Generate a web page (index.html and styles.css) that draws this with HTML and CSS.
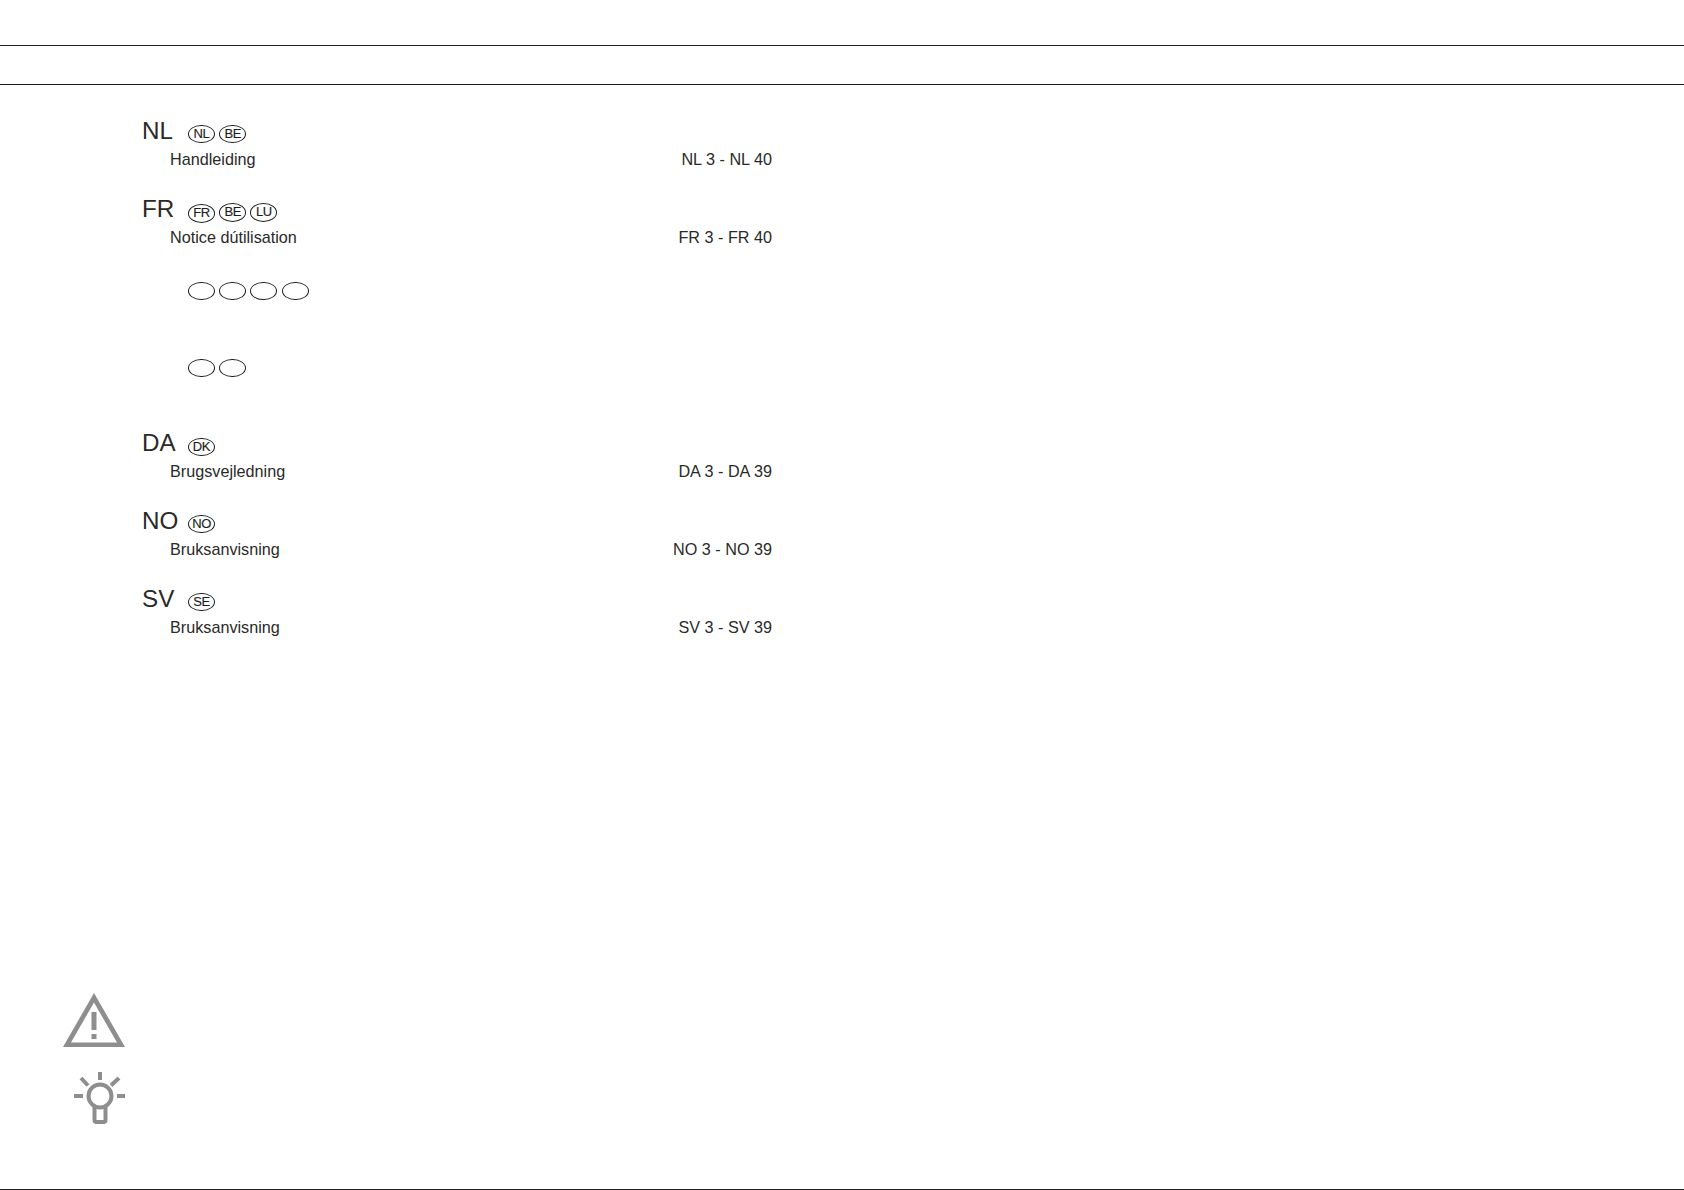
FILE: index.html
```html
<!DOCTYPE html>
<html lang="nl">
<head>
<meta charset="utf-8">
<title>Inhoud</title>
<link rel="stylesheet" href="styles.css">
</head>
<body>
<div class="page">
  <div class="band"></div>
  <main class="toc">
    <section class="entry">
      <div class="head"><span class="code">NL</span><span class="marks"><span class="mark">NL</span><span class="mark">BE</span></span></div>
      <div class="line"><span>Handleiding</span><span>NL 3 - NL 40</span></div>
    </section>
    <section class="entry">
      <div class="head"><span class="code">FR</span><span class="marks down"><span class="mark low">FR</span><span class="mark">BE</span><span class="mark">LU</span></span></div>
      <div class="line"><span>Notice dútilisation</span><span>FR 3 - FR 40</span></div>
    </section>
    <section class="entry">
      <div class="head"><span class="code">&nbsp;</span><span class="marks down"><span class="mark"></span><span class="mark"></span><span class="mark"></span><span class="mark"></span></span></div>
      <div class="line"><span>&nbsp;</span></div>
    </section>
    <section class="entry">
      <div class="head"><span class="code">&nbsp;</span><span class="marks"><span class="mark"></span><span class="mark"></span></span></div>
      <div class="line"><span>&nbsp;</span></div>
    </section>
    <section class="entry">
      <div class="head"><span class="code">DA</span><span class="marks down"><span class="mark">DK</span></span></div>
      <div class="line"><span>Brugsvejledning</span><span>DA 3 - DA 39</span></div>
    </section>
    <section class="entry">
      <div class="head"><span class="code">NO</span><span class="marks"><span class="mark">NO</span></span></div>
      <div class="line"><span>Bruksanvisning</span><span>NO 3 - NO 39</span></div>
    </section>
    <section class="entry">
      <div class="head"><span class="code">SV</span><span class="marks"><span class="mark">SE</span></span></div>
      <div class="line"><span>Bruksanvisning</span><span>SV 3 - SV 39</span></div>
    </section>
  </main>
  <div class="legend">
    <svg class="warn" width="62" height="54" viewBox="0 0 62 54" aria-hidden="true">
      <path fill-rule="evenodd" d="M31 0 L62 54 H0 Z M31 9.5 L8 49.5 H54 Z" fill="#8e8e8e"/>
      <rect x="28.5" y="19" width="5" height="18" fill="#8e8e8e"/>
      <rect x="28.5" y="41" width="5" height="5" fill="#8e8e8e"/>
    </svg>
    <svg class="bulb" width="52" height="52" viewBox="0 0 52 52" aria-hidden="true">
      <g fill="none" stroke="#8e8e8e" stroke-width="4">
        <path d="M26 0 V8"/>
        <path d="M7 6 L14 13.5"/>
        <path d="M45 6 L37 13.5"/>
        <path d="M0 24 H9"/>
        <path d="M43 24 H51"/>
        <circle cx="26" cy="24" r="11.5"/>
        <path d="M20.5 34 V48 Q20.5 50 22.5 50 H29.5 Q31.5 50 31.5 48 V34"/>
      </g>
    </svg>
  </div>
  <div class="ticks"><i class="tick blue"></i><i class="tick green"></i><i class="tick red"></i><i class="tick red"></i></div>
</div>
</body>
</html>
```

FILE: styles.css
```css
html, body {
  margin: 0;
  padding: 0;
  background: #fff;
}
.page {
  position: relative;
  height: 1190px;
  box-sizing: border-box;
  padding-top: 45px;
  border-bottom: 1px solid #1d1d1b;
  display: flex;
  flex-direction: column;
  font-family: "Liberation Sans", Arial, sans-serif;
  color: #2a2a28;
  overflow: hidden;
}
.band {
  height: 38px;
  border-top: 1px solid #1d1d1b;
  border-bottom: 1px solid #1d1d1b;
}
.toc {
  width: 630px;
  margin-left: 142px;
  padding-top: 30px;
}
.entry {
  height: 78px;
}
.head {
  display: flex;
  align-items: center;
  height: 34px;
}
.code {
  width: 46px;
  font-size: 24.2px;
  line-height: 32px;
  margin-bottom: 2px;
}
.marks {
  display: flex;
  align-items: flex-start;
  gap: 4.2px;
  margin-top: 4px;
}
.marks.down {
  margin-top: 6px;
}
.mark {
  box-sizing: border-box;
  width: 27px;
  height: 18.5px;
  border: 1.3px solid #1d1d1b;
  border-radius: 50%;
  color: #1d1d1b;
  font-size: 13px;
  line-height: 16px;
  text-align: center;
  letter-spacing: -0.4px;
  -webkit-text-stroke: 0.15px #1d1d1b;
}
.mark.low {
  margin-top: 1px;
}
.line {
  display: flex;
  justify-content: space-between;
  margin-left: 28px;
  font-size: 16.2px;
  line-height: 20px;
}
.legend {
  margin-top: auto;
  margin-bottom: 65px;
  margin-left: 63px;
  display: flex;
  flex-direction: column;
  align-items: flex-start;
  gap: 25px;
}
.bulb {
  margin-left: 11px;
}
.ticks {
  position: absolute;
  left: 663px;
  bottom: -1px;
  display: flex;
  gap: 4px;
}
.tick {
  width: 2px;
  height: 1px;
}
.tick.blue { background: #3b3fa0; }
.tick.green { background: #3a9a5c; }
.tick.red { background: #c8324a; }
```
